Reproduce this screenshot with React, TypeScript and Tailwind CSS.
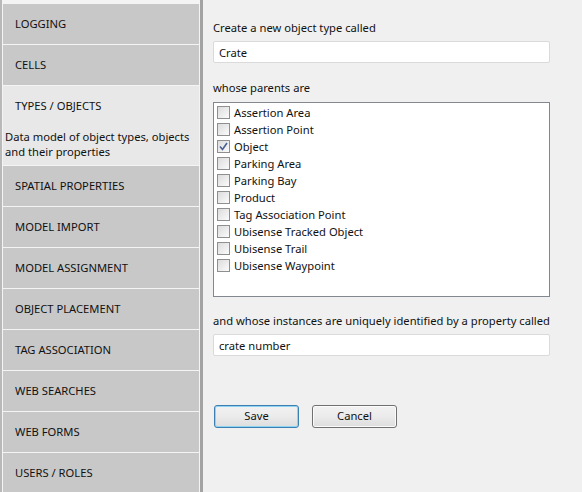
import { useState } from "react";

const navItems = [
  "LOGGING",
  "CELLS",
  "TYPES / OBJECTS",
  "SPATIAL PROPERTIES",
  "MODEL IMPORT",
  "MODEL ASSIGNMENT",
  "OBJECT PLACEMENT",
  "TAG ASSOCIATION",
  "WEB SEARCHES",
  "WEB FORMS",
  "USERS / ROLES",
];

const parentTypes = [
  "Assertion Area",
  "Assertion Point",
  "Object",
  "Parking Area",
  "Parking Bay",
  "Product",
  "Tag Association Point",
  "Ubisense Tracked Object",
  "Ubisense Trail",
  "Ubisense Waypoint",
];

const Checkbox = ({ checked }: { checked: boolean }) => (
  <span className="w-[13px] h-[13px] border border-[#8f8f8f] bg-gradient-to-br from-[#dcdcdc] to-[#fbfbfb] flex items-center justify-center shrink-0">
    {checked && (
      <svg width="9" height="9" viewBox="0 0 9 9">
        <path d="M1 4.5 L3.5 7.5 L8 1" fill="none" stroke="#4a5f97" strokeWidth="1.6" />
      </svg>
    )}
  </span>
);

export default function App() {
  const [name, setName] = useState("Crate");
  const [prop, setProp] = useState("crate number");
  const [parents, setParents] = useState<string[]>(["Object"]);

  const toggle = (p: string) =>
    setParents((cur) => (cur.includes(p) ? cur.filter((x) => x !== p) : [...cur, p]));

  return (
    <div className="flex w-[582px] h-[492px] overflow-hidden bg-[#f0f0f0] text-[11.2px] text-[#111] font-['Noto_Sans',sans-serif]">
      {/* sidebar */}
      <div className="w-[203px] shrink-0 flex bg-[#b9b9b9] pl-[2px]">
        <div className="w-[198px] border-l border-r border-[#f4f4f4] bg-[#f4f4f4] pt-[4px] flex flex-col gap-px">
          {navItems.map((item) =>
            item === "TYPES / OBJECTS" ? (
              <div key={item} className="bg-[#e8e8e8] h-[79px] shrink-0 overflow-hidden">
                <div className="h-[40px] flex items-center pl-[12px]">{item}</div>
                <div className="pl-[2px] pt-[3px] leading-[15px] whitespace-nowrap">
                  Data model of object types, objects
                  <br />
                  and their properties
                </div>
              </div>
            ) : (
              <div key={item} className="bg-[#c8c8c8] h-[40px] shrink-0 flex items-center pl-[12px]">
                {item}
              </div>
            )
          )}
        </div>
        <div className="w-[3px] bg-[#a3a3a3]" />
      </div>

      {/* content */}
      <div className="flex-1 pl-[10px] pt-[19px]">
        <div className="w-[337px]">
          <div className="leading-[17px]">Create a new object type called</div>
          <input
            value={name}
            onChange={(e) => setName(e.target.value)}
            className="mt-[5px] w-full h-[22px] bg-white border border-[#dadada] rounded-[2px] px-[5px] outline-none"
          />
          <div className="mt-[16px] leading-[17px]">whose parents are</div>
          <div className="mt-[6px] h-[195px] bg-white border border-[#828790] pt-[1px] pl-[3px]">
            {parentTypes.map((p) => (
              <label key={p} className="h-[17px] flex items-center gap-[4px] cursor-default" onClick={() => toggle(p)}>
                <Checkbox checked={parents.includes(p)} />
                <span className="leading-[17px]">{p}</span>
              </label>
            ))}
          </div>
          <div className="mt-[15px] leading-[17px] whitespace-nowrap">
            and whose instances are uniquely identified by a property called
          </div>
          <input
            value={prop}
            onChange={(e) => setProp(e.target.value)}
            className="mt-[5px] w-full h-[22px] bg-white border border-[#dadada] rounded-[2px] px-[5px] outline-none"
          />
          <div className="mt-[49px] flex gap-[13px] pl-px">
            <button className="w-[85px] h-[23px] rounded-[3px] border border-[#3c7fb1] bg-gradient-to-b from-[#f2f2f2] via-[#ebebeb] to-[#dddddd] shadow-[inset_0_0_0_1px_#8fd3f3]">
              Save
            </button>
            <button className="w-[85px] h-[23px] rounded-[3px] border border-[#707070] bg-gradient-to-b from-[#f2f2f2] via-[#ebebeb] to-[#dddddd] shadow-[inset_0_0_0_1px_#fbfbfb]">
              Cancel
            </button>
          </div>
        </div>
      </div>
    </div>
  );
}
